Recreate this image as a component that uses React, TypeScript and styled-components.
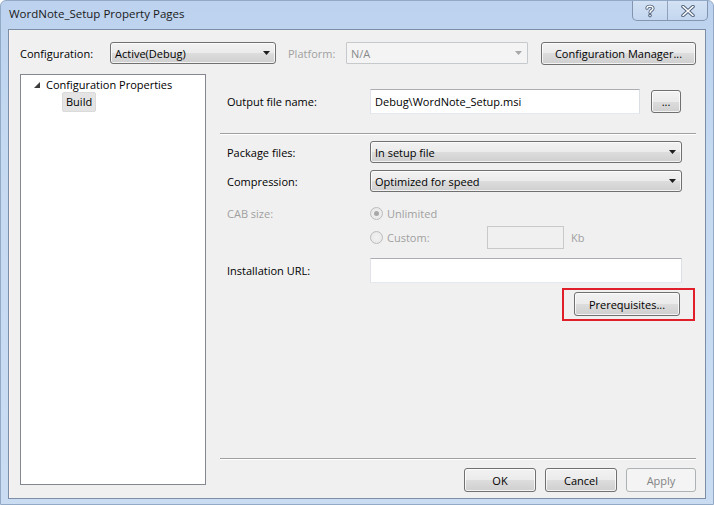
import React from 'react';
import styled, { createGlobalStyle } from 'styled-components';

const GlobalStyle = createGlobalStyle`
  html, body { margin: 0; padding: 0; background: #ffffff; }
  body {
    font-family: 'Open Sans', 'Noto Sans', sans-serif;
    font-size: 11px;
    color: #000;
  }
  * { box-sizing: border-box; }
`;

const Window = styled.div`
  width: 714px;
  height: 505px;
  display: flex;
  flex-direction: column;
  background: linear-gradient(180deg, #bcd2ee 0%, #c5d9f1 30%, #c9dcf2 100%);
  border: 1px solid #93aac7;
  border-radius: 6px 6px 0 0;
  overflow: hidden;
`;

const TitleBar = styled.div`
  height: 28px;
  display: flex;
  align-items: flex-start;
  padding-left: 8px;
`;

const Title = styled.div`
  margin-top: 5px;
  font-size: 11.5px;
  color: #1a1a1a;
`;

const CaptionGroup = styled.div`
  margin-left: auto;
  margin-right: 5px;
  display: flex;
  height: 20px;
  border: 1px solid rgba(70, 90, 120, 0.55);
  border-top: none;
  border-radius: 0 0 5px 5px;
  overflow: hidden;
  background: linear-gradient(180deg, rgba(255,255,255,0.35), rgba(255,255,255,0.1));
`;

const CaptionButton = styled.div<{ $w: number }>`
  width: ${p => p.$w}px;
  display: flex;
  align-items: center;
  justify-content: center;
  & + & { border-left: 1px solid rgba(70, 90, 120, 0.45); }
`;

const Client = styled.div`
  flex: 1;
  margin: 0 7px 5px 7px;
  border: 1px solid #7b8ea6;
  background: #f0f0f0;
  padding: 12px 9px 6px 11px;
  display: flex;
  flex-direction: column;
  box-shadow: inset 1px 0 0 #fbf3f3;
`;

const TopRow = styled.div`
  height: 22px;
  display: flex;
  align-items: center;
`;

const Label = styled.span<{ $w?: number; $disabled?: boolean }>`
  width: ${p => (p.$w ? `${p.$w}px` : 'auto')};
  flex-shrink: 0;
  color: ${p => (p.$disabled ? '#a0a0a0' : '#000')};
  white-space: nowrap;
`;

const Combo = styled.div<{ $w?: number; $disabled?: boolean }>`
  width: ${p => (p.$w ? `${p.$w}px` : 'auto')};
  flex: ${p => (p.$w ? '0 0 auto' : '1')};
  height: 22px;
  display: flex;
  align-items: center;
  justify-content: space-between;
  padding: 0 5px 0 4px;
  border: 1px solid ${p => (p.$disabled ? '#c5c9cc' : '#707070')};
  border-radius: ${p => (p.$disabled ? '1px' : '3px')};
  background: ${p =>
    p.$disabled
      ? '#f4f4f4'
      : 'linear-gradient(180deg, #f2f2f2 0%, #ebebeb 50%, #dddddd 50%, #cfcfcf 100%)'};
  box-shadow: ${p => (p.$disabled ? 'none' : 'inset 0 0 0 1px rgba(255,255,255,0.75)')};
  color: ${p => (p.$disabled ? '#8a8a8a' : '#000')};
  white-space: nowrap;
`;

const Button = styled.div<{ $w: number; $h?: number; $disabled?: boolean }>`
  width: ${p => p.$w}px;
  height: ${p => p.$h ?? 24}px;
  flex-shrink: 0;
  display: flex;
  align-items: center;
  justify-content: center;
  border: 1px solid ${p => (p.$disabled ? '#adb2b5' : '#707070')};
  border-radius: 3px;
  background: ${p =>
    p.$disabled
      ? '#f4f4f4'
      : 'linear-gradient(180deg, #f2f2f2 0%, #ebebeb 50%, #dddddd 50%, #cfcfcf 100%)'};
  box-shadow: ${p => (p.$disabled ? 'none' : 'inset 0 0 0 1px rgba(255,255,255,0.75)')};
  color: ${p => (p.$disabled ? '#838383' : '#000')};
  white-space: nowrap;
`;

const TextBox = styled.div<{ $w?: number; $h?: number; $disabled?: boolean }>`
  width: ${p => (p.$w ? `${p.$w}px` : 'auto')};
  flex: ${p => (p.$w ? '0 0 auto' : '1')};
  height: ${p => p.$h ?? 25}px;
  display: flex;
  align-items: center;
  padding-left: 4px;
  background: ${p => (p.$disabled ? '#f0f0f0' : '#ffffff')};
  border: 1px solid;
  border-color: ${p => (p.$disabled ? '#c9c9c9' : '#abadb3 #dbdfe6 #e3e9ef #e2e3ea')};
  white-space: nowrap;
`;

const MainRow = styled.div`
  flex: 1;
  margin-top: 10px;
  display: flex;
  gap: 12px;
`;

const Tree = styled.div`
  width: 186px;
  margin-bottom: 7px;
  background: #fff;
  border: 1px solid #828790;
  padding-top: 1px;
`;

const TreeItem = styled.div<{ $indent: number }>`
  height: 17px;
  display: flex;
  align-items: center;
  padding-left: ${p => p.$indent}px;
`;

const Expander = styled.span`
  width: 12px;
  display: flex;
  align-items: center;
`;

const Selected = styled.span`
  padding: 1px 3px 2px 3px;
  background: #e4e4e4;
  border: 1px solid #dadada;
  border-radius: 2px;
`;

const RightColumn = styled.div`
  flex: 1;
  display: flex;
  flex-direction: column;
`;

const Section = styled.div`
  padding: 0 14px 0 9px;
  display: flex;
  flex-direction: column;
`;

const Row = styled.div<{ $top: number; $h: number; $end?: boolean }>`
  margin-top: ${p => p.$top}px;
  height: ${p => p.$h}px;
  display: flex;
  align-items: center;
  justify-content: ${p => (p.$end ? 'flex-end' : 'flex-start')};
`;

const Separator = styled.div<{ $top: number }>`
  margin-top: ${p => p.$top}px;
  height: 2px;
  border-top: 1px solid #a0a0a0;
  border-bottom: 1px solid #ffffff;
  margin-left: 2px;
`;

const Spacer = styled.div`
  flex: 1;
`;

const PlatformLabel = styled(Label)`
  padding-left: 12px;
`;

const RadioGroup = styled.div<{ $w: number }>`
  width: ${p => p.$w}px;
  display: flex;
  align-items: center;
  gap: 4px;
  color: #a0a0a0;
`;

const Radio = styled.span<{ $checked?: boolean }>`
  width: 13px;
  height: 13px;
  border-radius: 50%;
  border: 1px solid #bcbcbc;
  background: radial-gradient(circle, #f2f2f2 0%, #e6e6e6 100%);
  display: flex;
  align-items: center;
  justify-content: center;
  &::after {
    content: '';
    display: ${p => (p.$checked ? 'block' : 'none')};
    width: 5px;
    height: 5px;
    border-radius: 50%;
    background: #a8a8a8;
  }
`;

const Unit = styled.span`
  margin-left: 7px;
  color: #a0a0a0;
`;

const Highlight = styled.div`
  margin-right: -13px;
  border: 2px solid #e11f2b;
  padding: 2px 13px 3px 10px;
`;

const BrowseButton = styled(Button)`
  margin-right: 1px;
`;

const ButtonRow = styled.div`
  margin-top: 8px;
  display: flex;
  justify-content: flex-end;
  gap: 9px;
`;

const Arrow = ({ disabled }: { disabled?: boolean }) => (
  <svg width="7" height="4" viewBox="0 0 7 4">
    <polygon points="0,0 7,0 3.5,4" fill={disabled ? '#a8a8a8' : '#1e1e1e'} />
  </svg>
);

const TreeArrow = () => (
  <svg width="6" height="6" viewBox="0 0 6 6">
    <polygon points="6,0 6,6 0,6" fill="#3c3c3c" />
  </svg>
);

const HelpIcon = () => (
  <svg width="10" height="14" viewBox="0 0 10 14">
    <path
      d="M2 4.2 C2 1.8 8 1.4 8 4.4 C8 6.4 5 6.4 5 8.6"
      fill="none"
      stroke="#53647c"
      strokeWidth="3.2"
      strokeLinecap="round"
    />
    <path
      d="M2 4.2 C2 1.8 8 1.4 8 4.4 C8 6.4 5 6.4 5 8.6"
      fill="none"
      stroke="#ffffff"
      strokeWidth="1.4"
      strokeLinecap="round"
    />
    <circle cx="5" cy="11.6" r="1.8" fill="#53647c" />
    <circle cx="5" cy="11.6" r="0.8" fill="#ffffff" />
  </svg>
);

const CloseIcon = () => (
  <svg width="14" height="12" viewBox="0 0 14 12">
    <path d="M2 1.5 L12 10.5 M12 1.5 L2 10.5" stroke="#53647c" strokeWidth="3.6" strokeLinecap="round" />
    <path d="M2 1.5 L12 10.5 M12 1.5 L2 10.5" stroke="#ffffff" strokeWidth="1.6" strokeLinecap="round" />
  </svg>
);

export default function App() {
  return (
    <>
      <GlobalStyle />
      <Window>
        <TitleBar>
          <Title>WordNote_Setup Property Pages</Title>
          <CaptionGroup>
            <CaptionButton $w={34}>
              <HelpIcon />
            </CaptionButton>
            <CaptionButton $w={40}>
              <CloseIcon />
            </CaptionButton>
          </CaptionGroup>
        </TitleBar>

        <Client>
          <TopRow>
            <Label $w={90}>Configuration:</Label>
            <Combo $w={166}>
              <span>Active(Debug)</span>
              <Arrow />
            </Combo>
            <PlatformLabel $w={70} $disabled>
              Platform:
            </PlatformLabel>
            <Combo $w={182} $disabled>
              <span>N/A</span>
              <Arrow disabled />
            </Combo>
            <Spacer />
            <Button $w={155} $h={23}>Configuration Manager...</Button>
          </TopRow>

          <MainRow>
            <Tree>
              <TreeItem $indent={13}>
                <Expander>
                  <TreeArrow />
                </Expander>
                Configuration Properties
              </TreeItem>
              <TreeItem $indent={41}>
                <Selected>Build</Selected>
              </TreeItem>
            </Tree>

            <RightColumn>
              <Section>
                <Row $top={15} $h={25}>
                  <Label $w={143}>Output file name:</Label>
                  <TextBox $w={270}>Debug\WordNote_Setup.msi</TextBox>
                  <Spacer />
                  <BrowseButton $w={30} $h={23}>...</BrowseButton>
                </Row>
              </Section>

              <Separator $top={19} />

              <Section>
                <Row $top={6} $h={22}>
                  <Label $w={143}>Package files:</Label>
                  <Combo>
                    <span>In setup file</span>
                    <Arrow />
                  </Combo>
                </Row>
                <Row $top={7} $h={22}>
                  <Label $w={143}>Compression:</Label>
                  <Combo>
                    <span>Optimized for speed</span>
                    <Arrow />
                  </Combo>
                </Row>
                <Row $top={12} $h={18}>
                  <Label $w={143} $disabled>
                    CAB size:
                  </Label>
                  <RadioGroup $w={117}>
                    <Radio $checked />
                    Unlimited
                  </RadioGroup>
                </Row>
                <Row $top={4} $h={23}>
                  <Label $w={143} />
                  <RadioGroup $w={117}>
                    <Radio />
                    Custom:
                  </RadioGroup>
                  <TextBox $w={77} $h={23} $disabled />
                  <Unit>Kb</Unit>
                </Row>
                <Row $top={9} $h={25}>
                  <Label $w={143}>Installation URL:</Label>
                  <TextBox />
                </Row>
                <Row $top={4} $h={35} $end>
                  <Highlight>
                    <Button $w={106}>Prerequisites...</Button>
                  </Highlight>
                </Row>
              </Section>

              <Spacer />
              <Separator $top={0} />

              <ButtonRow>
                <Button $w={72}>OK</Button>
                <Button $w={72}>Cancel</Button>
                <Button $w={70} $disabled>
                  Apply
                </Button>
              </ButtonRow>
            </RightColumn>
          </MainRow>
        </Client>
      </Window>
    </>
  );
}
